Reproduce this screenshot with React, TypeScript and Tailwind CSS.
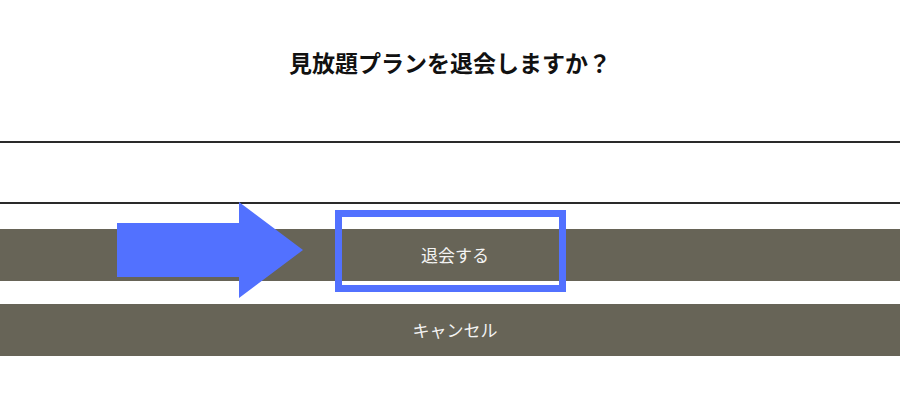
export default function App() {
  return (
    <div className="relative w-full h-[420px] bg-white overflow-hidden font-['Noto_Sans_CJK_JP','Noto_Sans',sans-serif]">
      <h1 className="pt-[46px] text-center text-[23px] leading-[32px] font-bold text-[#111]">
        見放題プランを退会しますか？
      </h1>

      <div className="mt-[63px] h-[63px] border-y-2 border-[#2a2a2a]" />

      <div className="mt-[25px] flex flex-col gap-[23px]">
        <button className="h-[52px] w-full bg-[#676457] pl-[10px] text-[17px] text-[#f3f3f3]">
          退会する
        </button>
        <button className="h-[52px] w-full bg-[#676457] pl-[10px] text-[17px] text-[#f3f3f3]">
          キャンセル
        </button>
      </div>

      {/* callout: arrow pointing at the confirm button */}
      <svg
        className="absolute left-[117px] top-[202px]"
        width="186"
        height="96"
        viewBox="0 0 186 96"
      >
        <polygon points="0,21 122,21 122,0 186,48 122,96 122,75 0,75" fill="#5271ff" />
      </svg>
      <div className="absolute left-[335px] top-[210px] w-[231px] h-[82px] border-[7px] border-[#5271ff]" />
    </div>
  );
}
